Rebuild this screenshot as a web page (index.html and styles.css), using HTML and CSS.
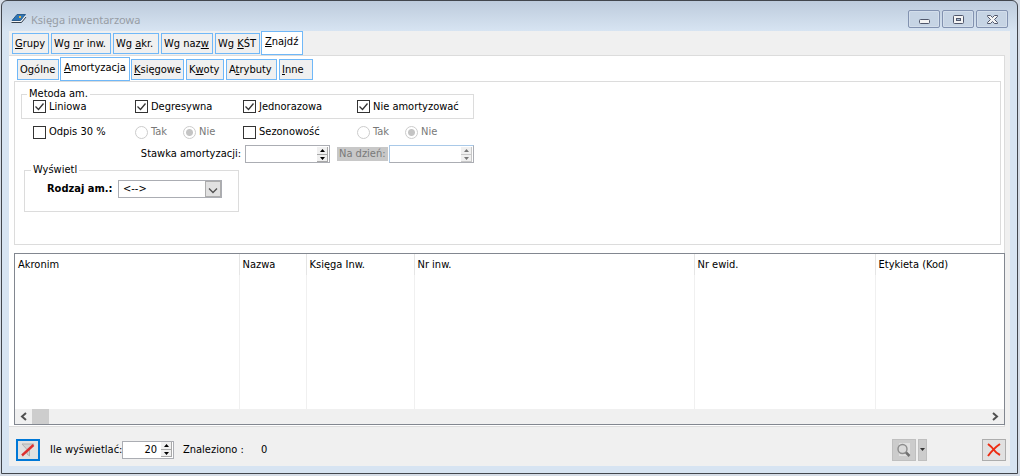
FILE: index.html
```html
<!DOCTYPE html>
<html lang="pl">
<head>
<meta charset="utf-8">
<title>Księga inwentarzowa</title>
<link rel="stylesheet" href="styles.css">
</head>
<body>
<div class="window">
  <header class="titlebar">
    <svg class="book" width="16" height="12" viewBox="0 0 16 12"><path d="M6 1.500h8.500l-5 6H1z" fill="#2f76b5" stroke="#2c5c8c"/><path d="M.5 8.500h9.500l4.500-5.500" fill="none" stroke="#f4f4f4"/><path d="M.5 9.500h10L15 4" fill="none" stroke="#37424e"/><path d="M8 3h2v2H8z" fill="#e5b64a"/></svg>
    <h1 class="title">Księga inwentarzowa</h1>
    <div class="winbuttons">
      <button class="winbtn" aria-label="Minimalizuj"><svg width="13" height="11" viewBox="0 0 13 11"><rect x="1.500" y="5.500" width="10" height="4" rx="1" fill="#f4f4f4" stroke="#50576b"/></svg></button>
      <button class="winbtn" aria-label="Maksymalizuj"><svg width="13" height="11" viewBox="0 0 13 11"><rect x="1.500" y="1.500" width="10" height="8" rx="1" fill="#f4f4f4" stroke="#50576b"/><rect x="4.500" y="4.500" width="4" height="2" fill="#a9bcd3" stroke="#50576b"/></svg></button>
      <button class="winbtn" aria-label="Zamknij"><svg width="13" height="11" viewBox="0 0 13 11"><path d="M1.500 1.500h3l2 2 2-2h3v1l-3 3 3 3v1h-3l-2-2-2 2h-3v-1l3-3-3-3z" fill="#f4f4f4" stroke="#50576b" stroke-linejoin="round"/></svg></button>
    </div>
  </header>
  <main class="client">
    <nav class="tabs">
      <button class="tab"><u>G</u>rupy</button>
      <button class="tab tab-nr">Wg <u>n</u>r inw.</button>
      <button class="tab tab-akr">Wg <u>a</u>kr.</button>
      <button class="tab tab-nazw">Wg naz<u>w</u></button>
      <button class="tab tab-kst">Wg <u>K</u>ŚT</button>
      <button class="tab tab-find active"><u>Z</u>najdź</button>
    </nav>
    <section class="page">
      <nav class="tabs subtabs">
        <button class="tab tab-general">O<u>g</u>ólne</button>
        <button class="tab tab-amort active"><u>A</u>mortyzacja</button>
        <button class="tab tab-books"><u>K</u>sięgowe</button>
        <button class="tab tab-sums">K<u>w</u>oty</button>
        <button class="tab tab-attrs">A<u>t</u>rybuty</button>
        <button class="tab tab-other"><u>I</u>nne</button>
      </nav>
      <form class="panel">
        <fieldset class="group methods">
          <legend>Metoda am.</legend>
          <label><input type="checkbox" checked>Liniowa</label>
          <label><input type="checkbox" checked>Degresywna</label>
          <label><input type="checkbox" checked>Jednorazowa</label>
          <label><input type="checkbox" checked>Nie amortyzować</label>
        </fieldset>
        <div class="options">
          <label><input type="checkbox">Odpis 30 %</label>
          <div class="radios">
            <label><input type="radio" name="odpis" disabled>Tak</label>
            <label><input type="radio" name="odpis" checked disabled>Nie</label>
          </div>
          <label><input type="checkbox">Sezonowość</label>
          <div class="radios">
            <label><input type="radio" name="sezon" disabled>Tak</label>
            <label><input type="radio" name="sezon" checked disabled>Nie</label>
          </div>
        </div>
        <div class="rates">
          <label class="rate-label" for="rate">Stawka amortyzacji:</label>
          <div class="spin"><input id="rate" type="text"><svg width="11" height="15" viewBox="0 0 11 15"><path d="M0 0h11v15H0z" fill="#f0f0f0"/><path d="M0 7.500h11M10.500 0v15M0 14.500h11" stroke="#a8a8a8"/><path d="M3 5h5L5.500 2zM3 10h5l-2.500 3z"/></svg></div>
          <label class="day-label" for="day">Na dzień:</label>
          <div class="spin day"><input id="day" type="text" disabled><svg width="11" height="15" viewBox="0 0 11 15"><path d="M0 0h11v15H0z" fill="#f0f0f0"/><path d="M0 7.500h11M10.500 0v15M0 14.500h11" stroke="#c8c8c8"/><path d="M3 5h5L5.500 2zM3 10h5l-2.500 3z" fill="#777"/></svg></div>
        </div>
        <fieldset class="group display">
          <legend>Wyświetl</legend>
          <label for="kind">Rodzaj am.:</label>
          <div class="combo"><select id="kind"><option>&lt;--&gt;</option></select><svg width="16" height="16" viewBox="0 0 16 16"><path d="M4 7.500l4 4 4-4" fill="none" stroke="#505050" stroke-width="1.300"/></svg></div>
        </fieldset>
      </form>
      <div class="grid">
        <table>
          <colgroup><col class="c1"><col class="c2"><col class="c3"><col class="c4"><col class="c5"><col></colgroup>
          <thead><tr><th>Akronim</th><th>Nazwa</th><th>Księga Inw.</th><th>Nr inw.</th><th>Nr ewid.</th><th>Etykieta (Kod)</th></tr></thead>
          <tbody><tr><td></td><td></td><td></td><td></td><td></td><td></td></tr></tbody>
        </table>
        <div class="scrollbar">
          <svg width="17" height="15" viewBox="0 0 17 15"><path d="M11 4L7 7.500l4 3.500" fill="none" stroke="#505050" stroke-width="2"/></svg>
          <span class="thumb"></span>
          <svg class="right" width="17" height="15" viewBox="0 0 17 15"><path d="M6 4l4 3.500L6 11" fill="none" stroke="#505050" stroke-width="2"/></svg>
        </div>
      </div>
    </section>
    <footer class="footer">
      <button class="tool filter" aria-label="Filtr"><svg width="16" height="16" viewBox="0 0 16 16"><path d="M2 2h12L9.500 7.500V14L7 12V7.500z" fill="#d2d2d2" stroke="#b0b0b0"/><path d="M2 13.500L13.500 3" stroke="#dc3030" stroke-width="2.400"/></svg></button>
      <label class="count-label" for="count">Ile wyświetlać:</label>
      <div class="spin count"><input id="count" type="text" value="20"><svg width="11" height="15" viewBox="0 0 11 15"><path d="M0 0h11v15H0z" fill="#f0f0f0"/><path d="M0 7.500h11M10.500 0v15M0 14.500h11" stroke="#a8a8a8"/><path d="M3 5h5L5.500 2zM3 10h5l-2.500 3z"/></svg></div>
      <span class="found">Znaleziono :</span><output>0</output>
      <div class="actions">
        <button class="tool grey" disabled aria-label="Podgląd"><svg width="16" height="16" viewBox="0 0 16 16"><path d="M3 1h11v13H3z" fill="#e0e0e0"/><circle cx="6.500" cy="7" r="4.500" fill="#dadada" stroke="#8c8c8c" stroke-width="1.400"/><path d="M10 10.500l3.500 3.500" stroke="#707070" stroke-width="2.500"/></svg></button>
        <button class="tool grey drop" disabled aria-label="Więcej"><svg width="7" height="4" viewBox="0 0 7 4"><path d="M1 0h5L3.500 3z" fill="#333"/></svg></button>
        <button class="tool cancel" aria-label="Anuluj"><svg width="16" height="16" viewBox="0 0 16 16"><path d="M2 2q4 3 6 6t6 5M14 2q-6 4-12 12" fill="none" stroke="#ed2c12" stroke-width="2"/></svg></button>
      </div>
    </footer>
  </main>
</div>
</body>
</html>
```
FILE: styles.css
```css
* { box-sizing: border-box; }
body {
  margin: 0;
  height: 100vh;
  padding: 0 2px 2px 1px;
  background: #d5dce6;
  font: 11px/14px Tahoma, "DejaVu Sans Condensed", sans-serif;
  color: #000;
}
button, input, select { font: inherit; color: inherit; margin: 0; padding: 0; border-radius: 0; }
.window {
  height: 100%;
  display: flex;
  flex-direction: column;
  border: 1px solid #42464d;
  border-radius: 6px 6px 0 0;
  padding: 0 7px 7px;
  background: linear-gradient(#bdcbdc, #d7e4f2 30px);
}
.titlebar { flex: none; height: 30px; display: flex; align-items: center; padding: 6px 2px 0 2px; }
.title { margin: 0; padding: 2px 0 0 4px; font: 11px/16px "Noto Sans", sans-serif; color: #979da5; }
.winbuttons { margin-left: auto; display: flex; gap: 2px; }
.winbtn {
  width: 32px; height: 18px;
  display: flex; align-items: center; justify-content: center;
  border: 1px solid #8292b0; border-radius: 2px;
  background: #c6d4e4;
  box-shadow: inset 0 0 0 1px #d3deeb;
}
.client { flex: 1; min-height: 0; display: flex; flex-direction: column; background: #f0f0f0; }
.tabs { flex: none; display: flex; align-items: flex-end; gap: 2px; padding-left: 3px; height: 24px; }
.tab {
  height: 21px;
  margin-bottom: 1px;
  width: 37px;
  border: 1px solid #70b8f8;
  background: #f0f0f0;
  white-space: nowrap;
  text-align: left;
  padding: 1px 0 0 2px;
}
.tab.active { height: 24px; margin: 0 0 0 -1px; background: #fff; padding: 0 0 3px 3px; }
.tab-nr { width: 60px; }
.tab-akr { width: 46px; }
.tab-nazw { width: 52px; }
.tab-kst { width: 45px; }
.tab-find { width: 42px; }
.subtabs { gap: 1px; padding-left: 8px; }
.tab-general { width: 42px; }
.subtabs .tab.active { width: 70px; margin-left: 0; }
.tab-books { width: 53px; }
.tab-sums { width: 38px; margin-left: 1px; }
.tab-attrs { width: 51px; margin-left: 1px; }
.tab-other { width: 34px; margin-left: 1px; }
.page {
  flex: 1; min-height: 0;
  display: flex; flex-direction: column;
  margin-right: 5px;
  padding-top: 1px;
  border: solid #dcdcdc;
  border-width: 1px 1px 1px 0;
  background: #fff;
}
.panel {
  flex: none;
  height: 164px;
  margin: 0 3px 8px 5px;
  padding: 5px 6px;
  border: 1px solid #dcdcdc;
}
label { display: flex; align-items: center; white-space: nowrap; }
.group { margin: 0; padding: 0; border: 1px solid #dcdcdc; min-width: 0; }
legend { padding: 0 2px; margin-left: 5px; line-height: 14px; }
.methods, .options { display: grid; grid-template-columns: 102px 108px 114px 1fr; width: 453px; padding-left: 11px; }
.methods { height: 32px; }
.methods legend { margin-left: -6px; }
.methods label { height: 11px; }
.options { margin-top: 6px; padding-left: 12px; height: 14px; }
.radios { display: flex; gap: 16px; color: #787878; }
input[type="checkbox"], input[type="radio"] {
  appearance: none;
  flex: none;
  width: 13px; height: 13px;
  margin-right: 3px;
  border: 1px solid #333;
  background: #fff;
}
input[type="checkbox"]:checked {
  background: #fff url("data:image/svg+xml,%3Csvg xmlns='http://www.w3.org/2000/svg' viewBox='0 0 11 11'%3E%3Cpath d='M1.500 5.500l3 3 5-6' fill='none' stroke='%23333' stroke-width='1.300'/%3E%3C/svg%3E") center / 11px 11px;
}
input[type="radio"] { border-color: #ccc; border-radius: 50%; }
input[type="radio"]:checked { background: radial-gradient(circle, #c4c4c4 3px, #fff 4px); }
.rates { display: flex; align-items: center; margin-top: 6px; height: 18px; }
.rate-label { width: 220px; justify-content: flex-end; }
.spin {
  display: flex; align-items: center;
  width: 85px; height: 18px;
  margin-left: 4px;
  padding-right: 1px;
  border: 1px solid #abadb3;
  background: #fff;
}
.spin input { flex: 1; min-width: 0; border: 0; outline: 0; background: transparent; }
.spin svg { flex: none; }
.day-label { margin-left: 7px; padding: 0 2px; background: #c8c8c8; color: #787878; width: 51px; }
.day { margin-left: 1px; border-color: #a9c9e8 #abadb3 #abadb3 #a9c9e8; }
.display { display: flex; margin: 0 0 0 3px; width: 215px; height: 49px; padding: 3px 0 0 22px; font-weight: bold; }
.display legend { font-weight: normal; margin-left: -16px; }
.display label { height: 18px; width: 67px; }
.combo { display: flex; position: relative; margin-left: 4px; width: 104px; height: 18px; font-weight: normal; }
.combo select { appearance: none; width: 100%; border: 1px solid #abadb3; background: #fff; padding-left: 4px; }
.combo svg { position: absolute; top: 1px; right: 1px; background: #e1e1e1; outline: 1px solid #adadad; outline-offset: -1px; pointer-events: none; }
.grid {
  flex: 1; min-height: 0;
  display: flex; flex-direction: column;
  margin: 0 -1px 1px 5px;
  border: 1px solid #828790;
}
table { flex: 1; width: 100%; table-layout: fixed; border-collapse: collapse; }
.c1 { width: 224px; } .c2 { width: 67px; } .c3 { width: 108px; } .c4 { width: 280px; } .c5 { width: 181px; }
th { height: 21px; padding: 0 3px; text-align: left; font-weight: normal; border-right: 1px solid #e5e5e5; }
td { padding: 0; border-right: 1px solid #f0f0f0; }
th:last-child, td:last-child { border-right: 0; }
.scrollbar { flex: none; display: flex; height: 15px; background: #f0f0f0; }
.thumb { width: 17px; background: #cdcdcd; }
.right { margin-left: auto; }
.footer { flex: none; display: flex; align-items: center; height: 39px; padding: 6px 4px 0 7px; }
.tool {
  flex: none;
  display: flex; align-items: center; justify-content: center;
  width: 24px; height: 22px;
  border: 1px solid #adadad;
  background: #e1e1e1;
}
.filter { border: 2px solid #0078d7; }
.count-label { margin-left: 10px; width: 71px; }
.count { width: 52px; margin-left: 1px; }
.count input { text-align: right; padding-right: 4px; }
.found { margin-left: 9px; width: 78px; white-space: nowrap; }
.actions { display: flex; margin-left: auto; gap: 2px; }
.grey { background: #ccc; border-color: #bfbfbf; }
.drop { width: 9px; }
.cancel { margin-left: 53px; }
```
